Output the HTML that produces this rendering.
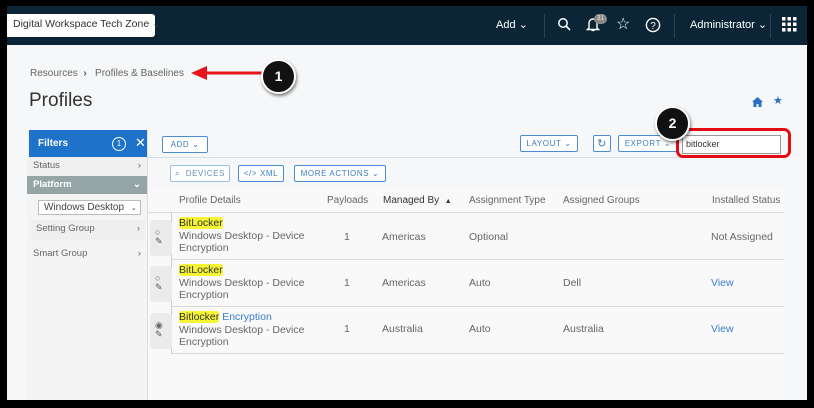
<!DOCTYPE html>
<html><head><meta charset="utf-8"><style>
*{box-sizing:border-box;margin:0;padding:0}
body{width:814px;height:408px;background:#000;font-family:"Liberation Sans",sans-serif;position:relative;overflow:hidden;color:#555}
.a{position:absolute}
#page{left:7px;top:6px;width:800px;height:394px;background:#f6f7f8;overflow:hidden}
#nav{left:7px;top:6px;width:800px;height:39px;background:#0c2536}
.t{position:absolute;white-space:nowrap}
.btn{position:absolute;border:1px solid #4b8dd1;border-radius:2px;background:#fff;color:#3c7cc0;font-size:8px;letter-spacing:.6px;display:flex;align-items:center;justify-content:center;height:17px}
.side{position:absolute;left:27px;width:120px;font-size:9.5px;color:#666}
.row{position:absolute;left:148px;width:636px;border-bottom:1px solid #d8d8d8}
.hl{background:#f5f533;border-radius:3px;color:#333}
.cell{position:absolute;font-size:10.5px;color:#666}
.ic{position:absolute;left:150px;width:22px;height:36px;background:#ebebeb;border-radius:3px}
</style></head><body>
<div id="page" class="a"></div>
<div id="nav" class="a"></div>
<div class="a" style="left:7px;top:14px;width:148px;height:23px;background:#fff;border-radius:0 3px 3px 0"></div>
<div class="t" style="left:13px;top:18px;font-size:10.5px;color:#333">Digital Workspace Tech Zone ⌄</div>
<div class="t" style="left:496px;top:18px;font-size:11px;color:#fff">Add ⌄</div>
<div class="a" style="left:544px;top:14px;width:1px;height:24px;background:#2c4252"></div>
<div class="a" style="left:674px;top:14px;width:1px;height:24px;background:#2c4252"></div>
<div class="a" style="left:770px;top:14px;width:1px;height:24px;background:#2c4252"></div>
<svg class="a" style="left:557px;top:17px" width="14" height="14" viewBox="0 0 14 14"><circle cx="6" cy="6" r="4.2" fill="none" stroke="#fff" stroke-width="1.5"/><path d="M9 9l4 4" stroke="#fff" stroke-width="1.6"/></svg>
<svg class="a" style="left:586px;top:16px" width="14" height="16" viewBox="0 0 14 16"><path d="M3 12V7a4 4 0 0 1 8 0v5l1.5 1.5h-11z" fill="none" stroke="#fff" stroke-width="1.4"/><path d="M5.5 14.5h3" stroke="#fff" stroke-width="1.3"/></svg>
<div class="a" style="left:594px;top:14px;width:13px;height:10px;border-radius:5px;background:#888;color:#ddd;font-size:7px;text-align:center;line-height:10px">31</div>
<div class="t" style="left:616px;top:14px;font-size:16px;color:#fff">☆</div>
<svg class="a" style="left:645px;top:17px" width="16" height="16" viewBox="0 0 16 16"><circle cx="8" cy="8" r="6.6" fill="none" stroke="#fff" stroke-width="1.4"/><text x="8" y="12" font-size="10" fill="#fff" text-anchor="middle" font-family="Liberation Sans">?</text></svg>
<div class="t" style="left:690px;top:18px;font-size:11px;color:#fff">Administrator ⌄</div>
<svg class="a" style="left:782px;top:17px" width="15" height="15"><g fill="#fff"><rect x="0" y="0" width="3.5" height="3.5"/><rect x="5.5" y="0" width="3.5" height="3.5"/><rect x="11" y="0" width="3.5" height="3.5"/><rect x="0" y="5.5" width="3.5" height="3.5"/><rect x="5.5" y="5.5" width="3.5" height="3.5"/><rect x="11" y="5.5" width="3.5" height="3.5"/><rect x="0" y="11" width="3.5" height="3.5"/><rect x="5.5" y="11" width="3.5" height="3.5"/><rect x="11" y="11" width="3.5" height="3.5"/></g></svg>

<div class="t" style="left:30px;top:68px;font-size:10px;color:#666">Resources &nbsp;<b style="color:#555">›</b>&nbsp;&nbsp; Profiles &amp; Baselines</div>
<svg class="a" style="left:185px;top:62px" width="80" height="22"><path d="M6 11l16-7v14z" fill="#e8141c"/><line x1="20" y1="11" x2="80" y2="11" stroke="#e8141c" stroke-width="3"/></svg>
<div class="a" style="left:261px;top:59px;width:35px;height:35px;border-radius:50%;background:#111;border:2px solid #fff;box-shadow:1px 2px 3px rgba(0,0,0,.5);color:#fff;font-weight:bold;font-size:14px;text-align:center;line-height:31px">1</div>
<div class="t" style="left:29px;top:90px;font-size:19px;color:#333">Profiles</div>
<svg class="a" style="left:752px;top:97px" width="11" height="10" viewBox="0 0 11 10"><path d="M5.5 0L0 5h1.5v5h3V7h2v3h3V5H11z" fill="#2a6fc0"/></svg>
<div class="t" style="left:773px;top:94px;font-size:11px;color:#2a6fc0">★</div>

<!-- sidebar -->
<div class="a" style="left:27px;top:130px;width:120px;height:270px;background:#f4f4f4"></div>
<div class="a" style="left:147px;top:130px;width:1px;height:270px;background:#ddd"></div>
<div class="a" style="left:29px;top:130px;width:118px;height:27px;background:#1f72c9"></div>
<div class="t" style="left:38px;top:138px;font-size:10px;color:#fff;font-weight:bold">Filters</div>
<div class="a" style="left:112px;top:137px;width:14px;height:14px;border:1.5px solid #fff;border-radius:50%;color:#fff;font-size:8px;text-align:center;line-height:11px">1</div>
<div class="t" style="left:135px;top:135px;font-size:13px;color:#fff">✕</div>
<div class="side" style="top:157px;height:19px;background:#f0f0f0;padding:3px 6px">Status<span style="float:right">›</span></div>
<div class="side" style="top:176px;height:18px;background:#95a5a6;color:#fff;font-weight:bold;padding:3px 6px">Platform<span style="float:right">⌄</span></div>
<div class="a" style="left:38px;top:200px;width:103px;height:15px;border:1px solid #bbb;background:#fff;font-size:10px;color:#444;padding-left:5px;line-height:13px">Windows Desktop <span style="font-size:7px;margin-left:4px">⌄</span></div>
<div class="side" style="top:220px;left:31px;width:114px;padding:3px 5px;background:#efefef;height:20px">Setting Group<span style="float:right">›</span></div>
<div class="side" style="top:246px;padding:2px 6px;height:18px">Smart Group<span style="float:right">›</span></div>

<!-- toolbar -->
<div class="btn" style="left:162px;top:136px;width:46px">ADD&nbsp;⌄</div>
<div class="a" style="left:148px;top:157px;width:636px;height:1px;background:#d6dde4"></div>
<div class="btn" style="left:520px;top:135px;width:58px">LAYOUT&nbsp;⌄</div>
<div class="btn" style="left:593px;top:135px;width:18px;font-size:11px">↻</div>
<div class="btn" style="left:618px;top:135px;width:60px">EXPORT&nbsp;⌄</div>
<div class="a" style="left:682px;top:135px;width:99px;height:19px;background:#fff;border:1px solid #999;font-size:9px;color:#333;padding:3px 3px">bitlocker</div>
<div class="a" style="left:676px;top:128px;width:115px;height:30px;border:3px solid #e30c14;border-radius:7px"></div>
<div class="a" style="left:655px;top:106px;width:35px;height:35px;border-radius:50%;background:#111;border:2px solid #fff;box-shadow:1px 2px 3px rgba(0,0,0,.5);color:#fff;font-weight:bold;font-size:14px;text-align:center;line-height:31px">2</div>
<div class="btn" style="left:170px;top:165px;width:60px;border-color:#9dbde0;color:#6a8fb8">⌕&nbsp;&nbsp;DEVICES</div>
<div class="btn" style="left:238px;top:165px;width:46px">&lt;/&gt;&nbsp;XML</div>
<div class="btn" style="left:294px;top:165px;width:92px">MORE ACTIONS&nbsp;⌄</div>

<!-- table -->
<div class="a" style="left:148px;top:190px;width:636px;height:210px;background:#f9f9f9"></div>
<div class="cell" style="left:179px;top:195px;font-size:10px">Profile Details</div>
<div class="cell" style="left:327px;top:195px;font-size:10px">Payloads</div>
<div class="cell" style="left:383px;top:195px;font-size:10px;color:#333">Managed By &nbsp;<span style="font-size:7px">▲</span></div>
<div class="cell" style="left:469px;top:195px;font-size:10px">Assignment Type</div>
<div class="cell" style="left:563px;top:195px;font-size:10px">Assigned Groups</div>
<div class="cell" style="left:712px;top:195px;font-size:10px">Installed Status</div>
<div class="row" style="top:212px;height:1px"></div>
<div class="a" style="left:171px;top:213px;width:1px;height:141px;background:#ccc"></div>
<div class="row" style="left:171px;width:613px;top:259px;height:1px"></div>
<div class="row" style="left:171px;width:613px;top:306px;height:1px"></div>
<div class="row" style="left:171px;width:613px;top:353px;height:1px"></div>

<div class="ic" style="top:220px"></div><div class="ic" style="top:266px"></div><div class="ic" style="top:313px"></div>
<div class="t" style="left:155px;top:227px;font-size:9px;color:#666">○</div>
<div class="t" style="left:155px;top:273px;font-size:9px;color:#666">○</div>
<div class="t" style="left:155px;top:320px;font-size:9px;color:#666">◉</div>
<div class="t" style="left:155px;top:236px;font-size:9px;color:#555">✎</div>
<div class="t" style="left:155px;top:282px;font-size:9px;color:#555">✎</div>
<div class="t" style="left:155px;top:329px;font-size:9px;color:#555">✎</div>

<div class="cell" style="left:179px;top:217px;line-height:12.5px"><span class="hl">BitLocker</span><br>Windows Desktop - Device<br>Encryption</div>
<div class="cell" style="left:179px;top:264px;line-height:12.5px"><span class="hl">BitLocker</span><br>Windows Desktop - Device<br>Encryption</div>
<div class="cell" style="left:179px;top:311px;line-height:12.5px"><span class="hl">Bitlocker</span> <span style="color:#3a7ccc">Encryption</span><br>Windows Desktop - Device<br>Encryption</div>
<div class="cell" style="left:344px;top:231px">1</div><div class="cell" style="left:344px;top:277px">1</div><div class="cell" style="left:344px;top:323px">1</div>
<div class="cell" style="left:382px;top:231px">Americas</div><div class="cell" style="left:382px;top:277px">Americas</div><div class="cell" style="left:382px;top:323px">Australia</div>
<div class="cell" style="left:469px;top:231px">Optional</div><div class="cell" style="left:469px;top:277px">Auto</div><div class="cell" style="left:469px;top:323px">Auto</div>
<div class="cell" style="left:563px;top:277px">Dell</div><div class="cell" style="left:563px;top:323px">Australia</div>
<div class="cell" style="left:711px;top:231px">Not Assigned</div>
<div class="cell" style="left:711px;top:277px;color:#3a7ccc">View</div>
<div class="cell" style="left:711px;top:323px;color:#3a7ccc">View</div>
</body></html>
